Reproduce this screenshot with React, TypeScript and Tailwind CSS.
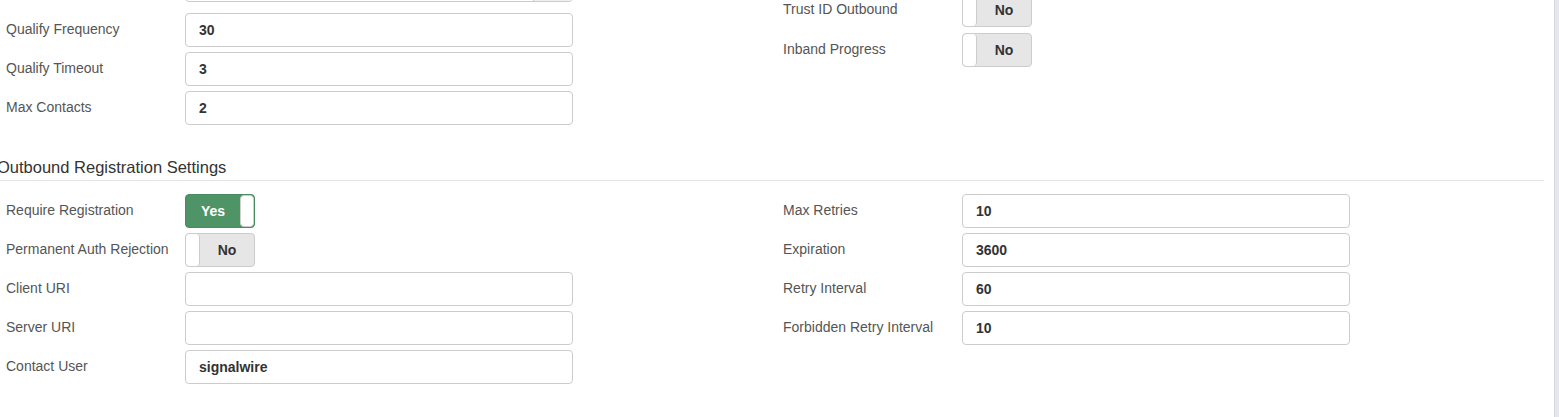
import React from 'react';

type Row = { label: string; kind: 'input' | 'on' | 'off'; value?: string };

const Toggle = ({ on }: { on: boolean }) =>
  on ? (
    <div className="flex h-[34px] w-[70px] items-stretch overflow-hidden rounded-[4px] border border-[#4a8a60] bg-[#4f9467]">
      <div className="flex flex-1 items-center justify-center text-[14px] font-bold text-white">Yes</div>
      <div className="w-[14px] rounded-[4px] border border-[#cfcfcf] bg-white" />
    </div>
  ) : (
    <div className="flex h-[34px] w-[70px] items-stretch overflow-hidden rounded-[4px] border border-[#cccccc] bg-[#e6e6e6]">
      <div className="w-[14px] rounded-[4px] border-r border-[#cccccc] bg-white" />
      <div className="flex flex-1 items-center justify-center text-[14px] font-bold text-[#333]">No</div>
    </div>
  );

const Field = ({ row }: { row: Row }) => (
  <div className="flex h-[34px] items-center">
    <label className="w-[185px] shrink-0 pb-[2px] pl-[6px] text-[14px] text-[#555]">{row.label}</label>
    {row.kind === 'input' ? (
      <div className="flex h-[34px] w-[388px] items-center rounded-[4px] border border-[#cccccc] bg-white px-[13px] text-[14px] font-bold text-[#333]">
        {row.value}
      </div>
    ) : (
      <Toggle on={row.kind === 'on'} />
    )}
  </div>
);

const topLeft: Row[] = [
  { label: 'Qualify Frequency', kind: 'input', value: '30' },
  { label: 'Qualify Timeout', kind: 'input', value: '3' },
  { label: 'Max Contacts', kind: 'input', value: '2' },
];

const topRight: Row[] = [
  { label: 'Trust ID Outbound', kind: 'off' },
  { label: 'Inband Progress', kind: 'off' },
];

const regLeft: Row[] = [
  { label: 'Require Registration', kind: 'on' },
  { label: 'Permanent Auth Rejection', kind: 'off' },
  { label: 'Client URI', kind: 'input', value: '' },
  { label: 'Server URI', kind: 'input', value: '' },
  { label: 'Contact User', kind: 'input', value: 'signalwire' },
];

const regRight: Row[] = [
  { label: 'Max Retries', kind: 'input', value: '10' },
  { label: 'Expiration', kind: 'input', value: '3600' },
  { label: 'Retry Interval', kind: 'input', value: '60' },
  { label: 'Forbidden Retry Interval', kind: 'input', value: '10' },
];

export default function App() {
  return (
    <div className="flex h-[417px] w-[1559px] overflow-hidden bg-white font-['Liberation_Sans',Arial,sans-serif]">
      <div className="flex w-[1554px] flex-col">
        {/* general settings, scrolled */}
        <div className="flex">
          <div className="flex w-[777px] flex-col gap-[5px] -mt-[32px]">
            <div className="flex h-[34px] items-center">
              <div className="w-[185px]" />
              <div className="flex h-[34px] w-[388px] justify-end overflow-hidden rounded-[4px] border border-[#cccccc] bg-white">
                <div className="w-[39px] border-l border-[#cccccc] bg-[#eeeeee]" />
              </div>
            </div>
            <div className="h-px" />
            {topLeft.map((r) => (
              <Field key={r.label} row={r} />
            ))}
          </div>
          <div className="flex w-[777px] flex-col gap-[6px] -mt-[7px]">
            {topRight.map((r) => (
              <Field key={r.label} row={r} />
            ))}
          </div>
        </div>

        <div className="mt-[32px] w-[1547px] -ml-[3px] border-b border-[#e5e5e5] pb-[2px]">
          <h3 className="text-[16.5px] leading-[21px] text-[#333]">Outbound Registration Settings</h3>
        </div>

        <div className="mt-[13px] flex">
          <div className="flex w-[777px] flex-col gap-[5px]">
            {regLeft.map((r) => (
              <Field key={r.label} row={r} />
            ))}
          </div>
          <div className="flex w-[777px] flex-col gap-[5px]">
            {regRight.map((r) => (
              <Field key={r.label} row={r} />
            ))}
          </div>
        </div>
      </div>
      <div className="w-[5px] border-l border-[#d3d7dc] bg-[#e4e7eb]" />
    </div>
  );
}
